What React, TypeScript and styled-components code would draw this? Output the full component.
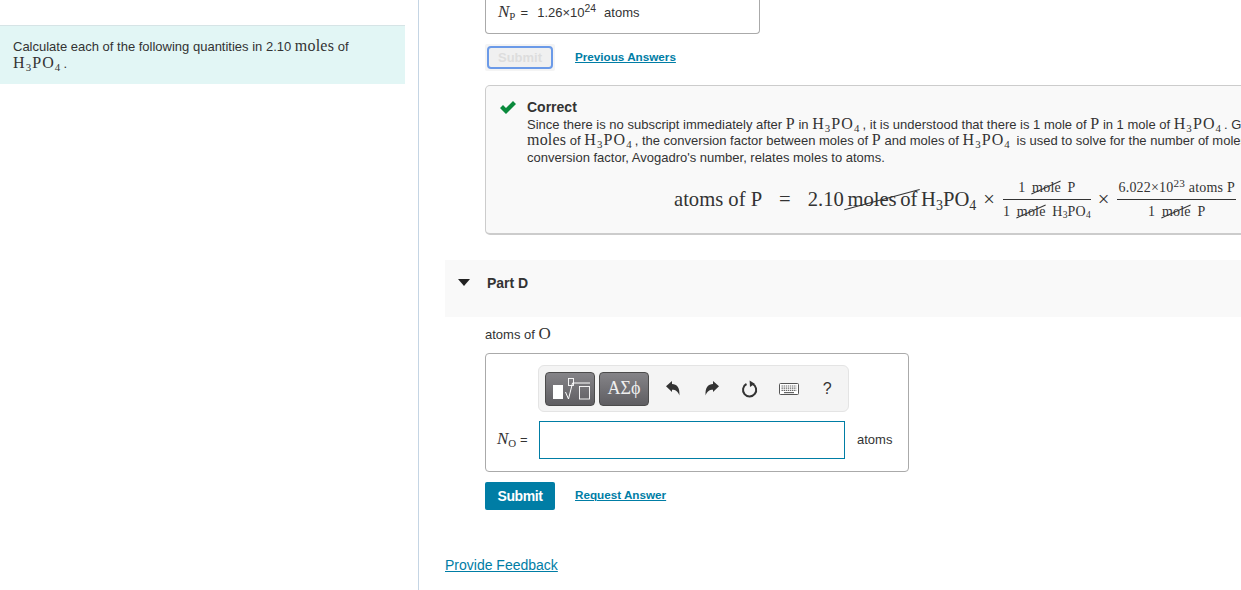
import React from 'react';
import styled, { createGlobalStyle } from 'styled-components';

const H3PO4 = function H3PO4() {
  return (
    <Formula>
      H<Sub>3</Sub>PO<Sub>4</Sub>
    </Formula>
  );
};

const Undo = function Undo({ flip }: { flip?: boolean }) {
  return (
    <IconSvg viewBox="0 0 14 15" $flip={flip}>
      <path d="M0 5.2 L6 0 V3 C10.8 3 14 6.2 13.4 14.5 C12 10.6 10 8.8 6 8.8 V11 Z" fill="#333" />
    </IconSvg>
  );
};

const App = function App() {
  return (
    <Page>
      <GlobalStyle />
      <LeftPane>
        <Prompt>
          Calculate each of the following quantities in 2.10 <Serif>moles</Serif> of
          <br />
          <H3PO4 />.
        </Prompt>
      </LeftPane>
      <RightPane>
        <PrevAnswer>
          <Italic>N</Italic>
          <Serif>
            <Sub>P</Sub>
          </Serif>
          <PrevEq>=</PrevEq>
          <PrevValue>
            1.26×10<Sup>24</Sup>
          </PrevValue>
          <span>atoms</span>
        </PrevAnswer>
        <Actions>
          <DisabledWrap>
            <DisabledSubmit>Submit</DisabledSubmit>
          </DisabledWrap>
          <ActionLink>Previous Answers</ActionLink>
        </Actions>
        <Feedback>
          <CheckIcon viewBox="0 0 16 13">
            <path d="M0 7 L3 4 L6 7 L13 0 L16 3 L6 13 Z" fill="#0a8a3c" />
          </CheckIcon>
          <FeedbackBody>
            <FeedbackTitle>Correct</FeedbackTitle>
            <Line>
              Since there is no subscript immediately after <Serif>P</Serif> in <H3PO4 />, it is understood that there
              is 1 mole of <Serif>P</Serif> in 1 mole of <H3PO4 />. Given
            </Line>
            <Line>
              <Serif>moles</Serif> of <H3PO4 />, the conversion factor between moles of <Serif>P</Serif> and moles of{' '}
              <H3PO4 /> is used to solve for the number of moles
            </Line>
            <Line>conversion factor, Avogadro's number, relates moles to atoms.</Line>
            <Equation>
              <span>atoms of P</span>
              <EqSign>=</EqSign>
              <EqMain>
                2.10 <Cancel $tilt={-15}>moles of</Cancel> H<Sub>3</Sub>PO<Sub>4</Sub>
              </EqMain>
              <Times>×</Times>
              <Fraction>
                <Top>
                  1 <Cancel $tilt={-24} $gap={3}>mole</Cancel> P
                </Top>
                <Bottom>
                  1 <Cancel $tilt={-24} $gap={3}>mole</Cancel> H<Sub>3</Sub>PO<Sub>4</Sub>
                </Bottom>
              </Fraction>
              <Times>×</Times>
              <Fraction>
                <Top>
                  6.022×10<Sup>23</Sup> atoms P
                </Top>
                <Bottom>
                  1 <Cancel $tilt={-24} $gap={3}>mole</Cancel> P
                </Bottom>
              </Fraction>
            </Equation>
          </FeedbackBody>
        </Feedback>
        <PartBar>
          <Caret />
          <PartTitle>Part D</PartTitle>
        </PartBar>
        <Question>
          atoms of <Serif $size={17}>O</Serif>
        </Question>
        <AnswerBox>
          <Toolbar>
            <ToolButton>
              <svg width="42" height="24" viewBox="0 0 42 24">
                <rect x="4" y="8" width="10" height="14" fill="#fff" />
                <rect x="19.5" y="1.5" width="5" height="7" fill="none" stroke="#fff" strokeWidth="0.9" />
                <path d="M16.5 15 L19.5 22 L23.5 6 H41" fill="none" stroke="#fff" strokeWidth="1" />
                <rect x="30.5" y="9.5" width="10" height="12.5" fill="none" stroke="#fff" strokeWidth="0.9" />
              </svg>
            </ToolButton>
            <ToolButton>
              <Greek>ΑΣϕ</Greek>
            </ToolButton>
            <ToolIcons>
              <Undo />
              <Undo flip />
              <svg width="18" height="18" viewBox="0 0 18 18">
                <path d="M11.5 3.9 A6.6 6.6 0 1 1 5.5 4" fill="none" stroke="#333" strokeWidth="2" />
                <path d="M8.6 0.4 L13.8 3.8 L9 7 Z" fill="#333" />
              </svg>
              <svg width="20" height="12" viewBox="0 0 20 12">
                <rect x="0.5" y="0.5" width="19" height="11" rx="1" fill="#fff" stroke="#555" />
                <path d="M2.5 3 H17.5 M2.5 5.2 H17.5 M2.5 7.4 H17.5" stroke="#666" strokeWidth="1.2" strokeDasharray="1.4 0.7" />
                <path d="M5 9.6 H15" stroke="#666" strokeWidth="1.2" />
              </svg>
              <Help>?</Help>
            </ToolIcons>
          </Toolbar>
          <InputRow>
            <Label>
              <Italic>N</Italic>
              <Serif>
                <Sub>O</Sub>
              </Serif>{' '}
              =
            </Label>
            <AnswerInput />
            <Unit>atoms</Unit>
          </InputRow>
        </AnswerBox>
        <Actions>
          <SubmitButton>Submit</SubmitButton>
          <ActionLink $lift={4}>Request Answer</ActionLink>
        </Actions>
        <FeedbackLink>Provide Feedback</FeedbackLink>
      </RightPane>
    </Page>
  );
};

const GlobalStyle = createGlobalStyle`
  html, body {
    margin: 0;
    height: 100%;
    overflow: hidden;
    background: #fff;
  }
  body {
    font-family: "Liberation Sans", Arial, sans-serif;
    font-size: 13px;
    color: #333;
  }
`;

const Page = styled.div`
  display: flex;
  width: 1241px;
  height: 590px;
  overflow: hidden;
`;

const LeftPane = styled.div`
  flex: none;
  width: 419px;
  height: 590px;
  padding-top: 25px;
  box-sizing: border-box;
  border-right: 1px solid #c5d5e4;
`;

const Prompt = styled.div`
  width: 405px;
  height: 59px;
  box-sizing: border-box;
  padding: 12px 13px 0;
  background: #e2f6f5;
  border-top: 1px solid #d6e4e6;
  line-height: 17px;
`;

const RightPane = styled.div`
  flex: 1;
  min-width: 0;
  padding-left: 26px;
  display: flex;
  flex-direction: column;
  align-items: flex-start;
`;

const Serif = styled.span<{ $size?: number }>`
  font-family: "Liberation Serif", "DejaVu Serif", serif;
  font-size: ${(p) => p.$size || 16}px;
  letter-spacing: 0.2px;
  line-height: 0;
`;

const Formula = styled(Serif)`
  letter-spacing: 1.1px;
  margin-right: 2px;
`;

const Italic = styled.span`
  font-family: "Liberation Serif", serif;
  font-style: italic;
  font-size: 17px;
  line-height: 0;
`;

const Sub = styled.sub`
  font-size: 0.68em;
  line-height: 0;
  vertical-align: -0.25em;
`;

const Sup = styled.sup`
  font-size: 0.8em;
  line-height: 0;
  vertical-align: 0.45em;
`;

const PrevAnswer = styled.div`
  width: 275px;
  height: 34px;
  margin-left: 40px;
  box-sizing: border-box;
  padding: 5px 0 0 12px;
  border: 1px solid #aaa;
  border-top: none;
  border-radius: 0 0 4px 4px;
  display: flex;
  align-items: baseline;
  white-space: pre;
`;

const PrevEq = styled.span`
  margin: 0 9px 0 5px;
`;

const PrevValue = styled.span`
  margin-right: 8px;
`;

const Actions = styled.div`
  display: flex;
  align-items: center;
  gap: 20px;
  margin: 10px 0 0 40px;
`;

const DisabledWrap = styled.div`
  width: 70px;
  height: 27px;
  box-sizing: border-box;
  padding: 2px;
  background: #f4f4f4;
  border-radius: 2px;
`;

const DisabledSubmit = styled.div`
  height: 23px;
  box-sizing: border-box;
  border: 2px solid #6b9ae8;
  border-radius: 4px;
  background: #f0f0f0;
  color: #ddd;
  font-size: 13px;
  font-weight: bold;
  line-height: 19px;
  text-align: center;
`;

const ActionLink = styled.a<{ $lift?: number }>`
  color: #007da5;
  font-size: 11.7px;
  font-weight: bold;
  text-decoration: underline;
  margin-bottom: ${(p) => p.$lift ?? 2}px;
`;

const Feedback = styled.div`
  flex: none;
  display: flex;
  width: 860px;
  height: 150px;
  margin: 14px 0 0 40px;
  box-sizing: border-box;
  padding: 13px 0 0 14px;
  background: #f9f9f9;
  border: 1px solid #ccc;
  border-bottom-width: 2px;
  border-radius: 5px;
`;

const CheckIcon = styled.svg`
  flex: none;
  width: 16px;
  height: 13px;
  margin-top: 2px;
`;

const FeedbackBody = styled.div`
  margin-left: 11px;
  white-space: nowrap;
`;

const FeedbackTitle = styled.div`
  font-size: 14px;
  font-weight: bold;
  line-height: 17.5px;
  color: #333;
`;

const Line = styled.div`
  height: 16.5px;
  line-height: 16.5px;
`;

const Equation = styled.div`
  display: flex;
  align-items: center;
  height: 50px;
  margin: 8px 0 0 147px;
  font-family: "Liberation Serif", serif;
  font-size: 20.6px;
  color: #333;
`;

const EqSign = styled.span`
  margin: 0 17px;
`;

const EqMain = styled.span`
  word-spacing: -1.5px;
`;

const Times = styled.span`
  margin: 0 8px 0 7px;
`;

const Cancel = styled.span<{ $tilt: number; $gap?: number }>`
  position: relative;
  margin: 0 ${(p) => p.$gap ?? 0}px;
  &::after {
    content: '';
    position: absolute;
    left: -6%;
    right: -6%;
    top: 50%;
    border-top: 1px solid #333;
    transform: rotate(${(p) => p.$tilt}deg);
  }
`;

const Fraction = styled.span`
  display: inline-flex;
  flex-direction: column;
  align-items: center;
  font-size: 14px;
  letter-spacing: 0.2px;
`;

const Top = styled.span`
  padding: 0 1px 3px;
  line-height: 17px;
`;

const Bottom = styled.span`
  align-self: stretch;
  text-align: center;
  padding-top: 3px;
  line-height: 17px;
  border-top: 1px solid #333;
`;

const PartBar = styled.div`
  flex: none;
  display: flex;
  align-items: center;
  width: 796px;
  height: 57px;
  margin-top: 25px;
  box-sizing: border-box;
  padding: 0 0 12px 13px;
  background: #f9f9f9;
`;

const Caret = styled.span`
  width: 0;
  height: 0;
  border-left: 6px solid transparent;
  border-right: 6px solid transparent;
  border-top: 7px solid #222;
`;

const PartTitle = styled.span`
  margin-left: 17px;
  font-size: 14px;
  font-weight: bold;
`;

const Question = styled.div`
  height: 20px;
  margin: 8px 0 0 40px;
  line-height: 20px;
`;

const AnswerBox = styled.div`
  flex: none;
  width: 424px;
  height: 119px;
  margin: 8px 0 0 40px;
  box-sizing: border-box;
  padding: 11px 11px 0;
  border: 1px solid #aaa;
  border-radius: 4px;
`;

const Toolbar = styled.div`
  display: flex;
  align-items: center;
  gap: 4px;
  width: 311px;
  height: 47px;
  margin-left: 41px;
  box-sizing: border-box;
  padding: 0 6px;
  background: #f4f4f4;
  border: 1px solid #e4e4e4;
  border-radius: 6px;
`;

const ToolButton = styled.div`
  display: flex;
  align-items: center;
  justify-content: center;
  flex: none;
  width: 50px;
  height: 34px;
  box-sizing: border-box;
  background: linear-gradient(#858488, #5f5e62);
  border: 1px solid #4c4c4c;
  border-radius: 4px;
`;

const Greek = styled.span`
  color: #eee;
  font-family: "Liberation Serif", serif;
  font-size: 18px;
`;

const ToolIcons = styled.div`
  display: grid;
  grid-template-columns: repeat(5, 38.5px);
  justify-items: center;
  align-items: center;
  margin-left: 1px;
`;

const IconSvg = styled.svg<{ $flip?: boolean }>`
  width: 14px;
  height: 15px;
  transform: ${(p) => (p.$flip ? 'scaleX(-1)' : 'none')};
`;

const Help = styled.span`
  font-size: 16px;
  color: #333;
`;

const InputRow = styled.div`
  display: flex;
  align-items: center;
  margin-top: 9px;
`;

const Label = styled.span`
  width: 42px;
  flex: none;
  white-space: pre;
  margin-bottom: 2px;
`;

const AnswerInput = styled.input`
  width: 306px;
  height: 38px;
  box-sizing: border-box;
  border: 1px solid #007da5;
  background: #fff;
  outline: none;
`;

const Unit = styled.span`
  margin: 0 0 2px 12px;
`;

const SubmitButton = styled.button`
  width: 70px;
  height: 28px;
  border: none;
  border-radius: 2px;
  background: #007da5;
  color: #fff;
  font-family: inherit;
  font-size: 14px;
  font-weight: bold;
  letter-spacing: -0.4px;
`;

const FeedbackLink = styled.a`
  margin-top: 47px;
  color: #007da5;
  font-size: 14px;
  text-decoration: underline;
`;

export default App;
